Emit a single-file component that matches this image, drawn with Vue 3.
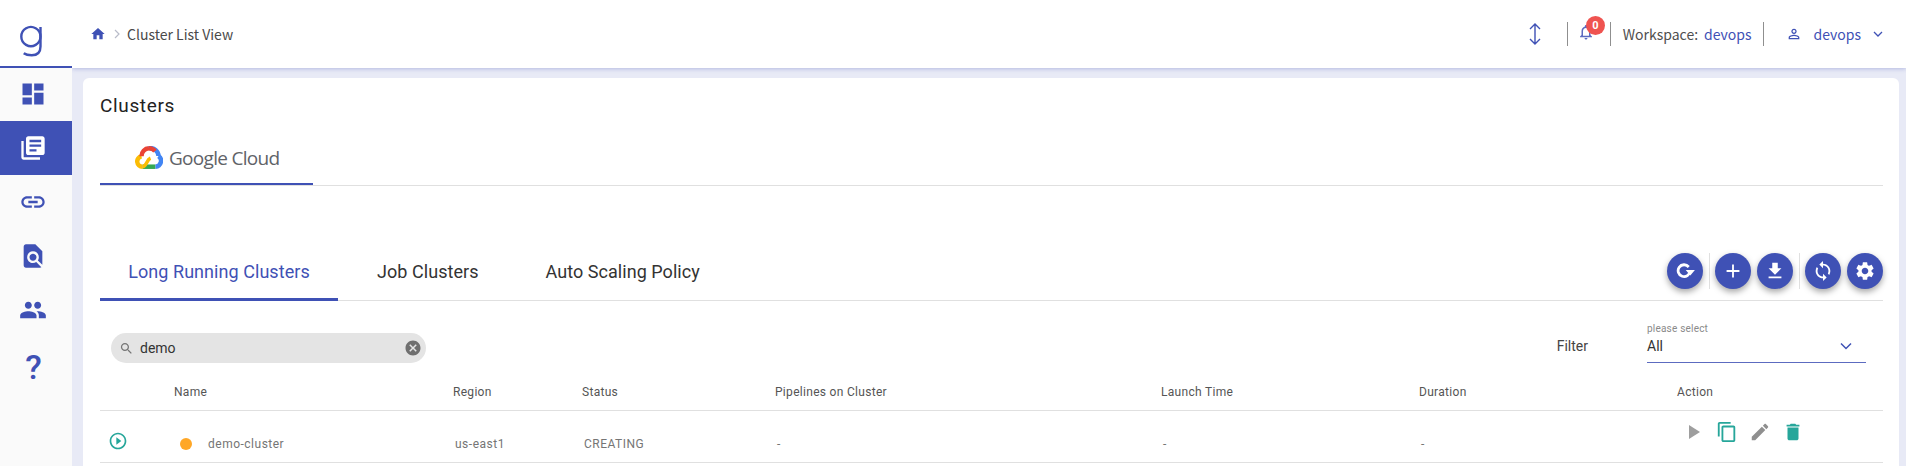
<script setup>
const icons = {
  home: 'M10 20v-6h4v6h5v-8h3L12 3 2 12h3v8z',
  dashboard: 'M3 13h8V3H3v10zm0 8h8v-6H3v6zm10 0h8V11h-8v10zm0-18v6h8V3h-8z',
  books: 'M4 6H2v14c0 1.1.9 2 2 2h14v-2H4V6zm16-4H8c-1.1 0-2 .9-2 2v12c0 1.1.9 2 2 2h12c1.1 0 2-.9 2-2V4c0-1.1-.9-2-2-2zm-1 9H9V9h10v2zm-4 4H9v-2h6v2zm4-8H9V5h10v2z',
  link: 'M3.9 12c0-1.71 1.39-3.1 3.1-3.1h4V7H7c-2.76 0-5 2.24-5 5s2.24 5 5 5h4v-1.9H7c-1.71 0-3.1-1.39-3.1-3.1zM8 13h8v-2H8v2zm9-6h-4v1.9h4c1.71 0 3.1 1.39 3.1 3.1s-1.39 3.1-3.1 3.1h-4V17h4c2.76 0 5-2.24 5-5s-2.24-5-5-5z',
  find: 'M20 19.59V8l-6-6H6c-1.1 0-1.99.9-1.99 2L4 20c0 1.1.89 2 1.99 2H18c.45 0 .85-.15 1.19-.4l-4.43-4.43c-.8.52-1.74.83-2.76.83-2.76 0-5-2.24-5-5s2.24-5 5-5 5 2.24 5 5c0 1.02-.31 1.96-.83 2.75L20 19.59zM9 13c0 1.66 1.34 3 3 3s3-1.34 3-3-1.34-3-3-3-3 1.34-3 3z',
  people: 'M16 11c1.66 0 2.99-1.34 2.99-3S17.66 5 16 5c-1.66 0-3 1.34-3 3s1.34 3 3 3zm-8 0c1.66 0 2.99-1.34 2.99-3S9.66 5 8 5C6.34 5 5 6.34 5 8s1.34 3 3 3zm0 2c-2.33 0-7 1.17-7 3.5V19h14v-2.5c0-2.33-4.67-3.5-7-3.5zm8 0c-.29 0-.62.02-.97.05 1.16.84 1.97 1.97 1.97 3.45V19h6v-2.5c0-2.33-4.67-3.5-7-3.5z',
  add: 'M19 13h-6v6h-2v-6H5v-2h6V5h2v6h6v2z',
  download: 'M19 9h-4V3H9v6H5l7 7 7-7zM5 18v2h14v-2H5z',
  sync: 'M12 4V1L8 5l4 4V6c3.31 0 6 2.69 6 6 0 1.01-.25 1.97-.7 2.8l1.46 1.46C19.54 15.03 20 13.57 20 12c0-4.42-3.58-8-8-8zm0 14c-3.31 0-6-2.69-6-6 0-1.01.25-1.97.7-2.8L5.24 7.74C4.46 8.97 4 10.43 4 12c0 4.42 3.58 8 8 8v3l4-4-4-4v3z',
  settings: 'M19.14 12.94c.04-.3.06-.61.06-.94 0-.32-.02-.64-.07-.94l2.03-1.58c.18-.14.23-.41.12-.61l-1.92-3.32c-.12-.22-.37-.29-.59-.22l-2.39.96c-.5-.38-1.03-.7-1.62-.94l-.36-2.54c-.04-.24-.24-.41-.48-.41h-3.84c-.24 0-.43.17-.47.41l-.36 2.54c-.59.24-1.13.57-1.62.94l-2.39-.96c-.22-.08-.47 0-.59.22L2.74 8.87c-.12.21-.08.47.12.61l2.03 1.58c-.05.3-.09.63-.09.94s.02.64.07.94l-2.03 1.58c-.18.14-.23.41-.12.61l1.92 3.32c.12.22.37.29.59.22l2.39-.96c.5.38 1.03.7 1.62.94l.36 2.54c.05.24.24.41.48.41h3.84c.24 0 .44-.17.47-.41l.36-2.54c.59-.24 1.13-.56 1.62-.94l2.39.96c.22.08.47 0 .59-.22l1.92-3.32c.12-.22.07-.47-.12-.61l-2.01-1.58zM12 15.6c-1.98 0-3.6-1.62-3.6-3.6s1.62-3.6 3.6-3.6 3.6 1.62 3.6 3.6-1.62 3.6-3.6 3.6z',
  rotate: 'M17.2 6.500A8 8 0 1 0 19 12h-3A5 5 0 1 1 15 8.700zM12.800 11l5 6 5-6z',
  play: 'M8 5v14l11-7z',
  playCircle: 'M10 16.5l6-4.5-6-4.5v9zM12 2C6.48 2 2 6.48 2 12s4.48 10 10 10 10-4.48 10-10S17.52 2 12 2zm0 18c-4.41 0-8-3.59-8-8s3.59-8 8-8 8 3.59 8 8-3.59 8-8 8z',
  copy: 'M16 1H4c-1.1 0-2 .9-2 2v14h2V3h12V1zm3 4H8c-1.1 0-2 .9-2 2v14c0 1.1.9 2 2 2h11c1.1 0 2-.9 2-2V7c0-1.1-.9-2-2-2zm0 16H8V7h11v14z',
  edit: 'M3 17.25V21h3.75L17.81 9.94l-3.75-3.75L3 17.25zM20.71 7.04c.39-.39.39-1.02 0-1.41l-2.34-2.34c-.39-.39-1.02-.39-1.41 0l-1.83 1.83 3.75 3.75 1.83-1.83z',
  trash: 'M6 19c0 1.1.9 2 2 2h8c1.1 0 2-.9 2-2V7H6v12zM19 4h-3.5l-1-1h-5l-1 1H5v2h14V4z',
  search: 'M15.5 14h-.79l-.28-.27C15.41 12.59 16 11.11 16 9.5 16 5.91 13.09 3 9.5 3S3 5.91 3 9.5 5.91 16 9.5 16c1.61 0 3.09-.59 4.23-1.57l.27.28v.79l5 4.99L20.49 19l-4.99-5zm-6 0C7.01 14 5 11.99 5 9.5S7.01 5 9.5 5 14 7.01 14 9.5 11.99 14 9.5 14z',
  cancel: 'M12 2C6.47 2 2 6.47 2 12s4.47 10 10 10 10-4.47 10-10S17.53 2 12 2zm5 13.59L15.59 17 12 13.41 8.41 17 7 15.59 10.59 12 7 8.41 8.41 7 12 10.59 15.59 7 17 8.41 13.41 12 17 15.59z',
  bell: 'M12 22c1.1 0 2-.9 2-2h-4c0 1.1.9 2 2 2zm6-6v-5c0-3.07-1.63-5.64-4.5-6.32V4c0-.83-.67-1.5-1.5-1.5s-1.5.67-1.5 1.5v.68C7.64 5.36 6 7.92 6 11v5l-2 2v1h16v-1l-2-2zm-2 1H8v-6c0-2.48 1.51-4.5 4-4.5s4 2.02 4 4.5v6z',
  person: 'M12 5.9c1.16 0 2.1.94 2.1 2.1s-.94 2.1-2.1 2.1S9.9 9.16 9.9 8s.94-2.1 2.1-2.1m0 9c2.97 0 6.1 1.46 6.1 2.1v1.1H5.9V17c0-.64 3.13-2.1 6.1-2.1M12 4C9.79 4 8 5.79 8 8s1.79 4 4 4 4-1.79 4-4-1.79-4-4-4zm0 9c-2.67 0-8 1.34-8 4v3h16v-3c0-2.66-5.33-4-8-4z',
}
const nav = [
  { icon: 'dashboard' },
  { icon: 'books', active: true },
  { icon: 'link' },
  { icon: 'find' },
  { icon: 'people' },
  { text: '?' },
]
const tabs = ['Long Running Clusters', 'Job Clusters', 'Auto Scaling Policy']
const columns = ['', 'Name', 'Region', 'Status', 'Pipelines on Cluster', 'Launch Time', 'Duration', 'Action']
const fabGroups = [['rotate'], ['add', 'download'], ['sync', 'settings']]
</script>

<template>
  <div class="app">
    <aside class="sidebar">
      <div class="logo">
        <svg width="24" height="34" viewBox="0 0 24 34" fill="none" stroke="#3f51b5" stroke-width="2.400">
          <path d="M21.500 11.500a9.600 9.600 0 1 0 0 .1" />
          <path d="M21.500 2v19.500c0 6-3.600 8.800-8.800 8.800c-3 0-6-.6-8-2" />
        </svg>
      </div>
      <div v-for="(item, i) in nav" :key="i" class="nav-item" :class="{ active: item.active }">
        <svg v-if="item.icon" width="28" height="28" viewBox="0 0 24 24"><path :d="icons[item.icon]" fill="currentColor" /></svg>
        <span v-else class="question">{{ item.text }}</span>
      </div>
    </aside>

    <div class="main">
      <header class="topbar">
        <svg class="home" width="16" height="16" viewBox="0 0 24 24"><path :d="icons.home" fill="#3f51b5" /></svg>
        <svg class="crumb-sep" width="8" height="10" viewBox="0 0 8 10" fill="none" stroke="#b9bcc9" stroke-width="1.200"><path d="M2 1l4 4-4 4" /></svg>
        <span class="crumb">Cluster List View</span>
        <div class="top-right">
          <svg class="updown" width="14" height="22" viewBox="0 0 14 22" fill="none" stroke="#3f51b5" stroke-width="1.400"><path d="M7 1.500v19M2 6l5-5 5 5M2 16l5 5 5-5" /></svg>
          <i class="vline first"></i>
          <div class="bell">
            <svg width="18" height="18" viewBox="0 0 24 24"><path :d="icons.bell" fill="#5c6bc0" /></svg>
            <span class="badge">0</span>
          </div>
          <i class="vline second"></i>
          <span class="ws-label">Workspace:</span>
          <span class="ws-value">devops</span>
          <i class="vline third"></i>
          <svg class="person" width="16" height="16" viewBox="0 0 24 24"><path :d="icons.person" fill="#3f51b5" /></svg>
          <span class="user">devops</span>
          <svg class="chev" width="10" height="7" viewBox="0 0 10 7" fill="none" stroke="#3f51b5" stroke-width="1.300"><path d="M1 1l4 4 4-4" /></svg>
        </div>
      </header>

      <div class="content">
        <section class="card">
          <h1 class="title">Clusters</h1>
          <div class="cloud-tabs">
            <div class="cloud-tab">
              <svg width="28" height="23" viewBox="0 0 28 23" fill="none" stroke-width="4.500">
                <path d="M7.500 20.700H20.500" stroke="#34a853" />
                <path d="M20.500 20.700a5.800 5.800 0 0 0 3-10.600" stroke="#4285f4" />
                <path d="M7.500 20.700a5.300 5.300 0 0 1-1-10.500" stroke="#fbbc04" />
                <path d="M6.500 10.200a7.800 7.800 0 0 1 7.500-7.900" stroke="#ea4335" />
                <path d="M14 2.300a8 8 0 0 1 9.500 7.800" stroke="#4285f4" />
                <path d="M14 2.300a8 8 0 0 1 6 2.800" stroke="#ea4335" />
                <path d="M7.500 20.700c4 0 4-7 8-8.500" stroke="#fbbc04" stroke-width="3.500" />
              </svg>
              <span class="cloud-word">Google Cloud</span>
            </div>
          </div>

          <div class="tabs-row">
            <div v-for="(t, i) in tabs" :key="t" class="tab" :class="{ active: i === 0 }">{{ t }}</div>
            <div class="fabs">
              <div v-for="(group, g) in fabGroups" :key="g" class="fab-group">
                <button v-for="f in group" :key="f" class="fab">
                  <svg width="22" height="22" viewBox="0 0 24 24"><path :d="icons[f]" fill="#fff" /></svg>
                </button>
              </div>
            </div>
          </div>

          <div class="tools">
            <div class="search">
              <svg width="15" height="15" viewBox="0 0 24 24"><path :d="icons.search" fill="#757575" /></svg>
              <span class="search-text">demo</span>
              <svg class="clear" width="18" height="18" viewBox="0 0 24 24"><path :d="icons.cancel" fill="#6f6f6f" /></svg>
            </div>
            <span class="filter">Filter</span>
            <div class="select">
              <span class="select-label">please select</span>
              <div class="select-value">
                <span>All</span>
                <svg width="12" height="8" viewBox="0 0 12 8" fill="none" stroke="#3f51b5" stroke-width="1.500"><path d="M1 1.500l5 5 5-5" /></svg>
              </div>
            </div>
          </div>

          <div class="grid head">
            <div v-for="c in columns" :key="c">{{ c }}</div>
          </div>
          <div class="grid row">
            <div class="expand"><svg width="20" height="20" viewBox="0 0 24 24"><path :d="icons.playCircle" fill="#26a69a" /></svg></div>
            <div class="name"><span class="dot"></span>demo-cluster</div>
            <div>us-east1</div>
            <div>CREATING</div>
            <div>-</div>
            <div>-</div>
            <div>-</div>
            <div class="actions">
              <svg width="24" height="24" viewBox="0 0 24 24"><path :d="icons.play" fill="#9e9e9e" /></svg>
              <svg width="22" height="22" viewBox="0 0 24 24"><path :d="icons.copy" fill="#26a69a" /></svg>
              <svg width="22" height="22" viewBox="0 0 24 24"><path :d="icons.edit" fill="#8f8f8f" /></svg>
              <svg width="22" height="22" viewBox="0 0 24 24"><path :d="icons.trash" fill="#26a69a" /></svg>
            </div>
          </div>
        </section>
      </div>
    </div>
  </div>
</template>

<style>
html, body { margin: 0; padding: 0; overflow: hidden; background: #fafafa; }
</style>

<style scoped>
.app { display: flex; width: 1906px; height: 466px; overflow: hidden; font-family: Roboto, "Liberation Sans", sans-serif; }

.sidebar { width: 72px; flex: none; background: #fafafa; display: flex; flex-direction: column; position: relative; z-index: 2; }
.logo { height: 66px; background: #fff; border-bottom: 2px solid #3f51b5; display: flex; align-items: center; justify-content: center; margin-bottom: -1px; }
.logo svg { margin-top: 17px; margin-right: 10px; }
.nav-item { height: 54px; display: flex; align-items: center; justify-content: center; color: #3f51b5; padding-right: 6px; }
.nav-item.active { background: #3f51b5; color: #fff; }
.question { font: 500 34px Roboto, sans-serif; line-height: 1; margin: 6px 0 0 1px; }

.main { flex: 1; min-width: 0; display: flex; flex-direction: column; background: #e8eaf6; }
.topbar { height: 68px; flex: none; background: #fff; display: flex; align-items: center; padding-left: 18px; box-shadow: 0 1px 4px rgba(63, 81, 181, .3); position: relative; font-family: "Noto Sans CJK SC", "Noto Sans", sans-serif; }
.home { margin-right: 7px; }
.crumb-sep { margin-right: 6px; }
.crumb { font-size: 14px; color: #4a4a4a; }
.top-right { margin-left: auto; display: flex; align-items: center; padding-right: 23px; font-size: 14px; }
.updown { margin-right: 25px; }
.vline { display: block; width: 1px; height: 24px; background: #8f8f8f; }
.bell { position: relative; width: 18px; height: 18px; margin: -4px 15px 0 9px; }
.bell svg { display: block; }
.badge { position: absolute; left: 9px; top: -7px; width: 19px; height: 19px; border-radius: 50%; background: #ef5350; color: #fff; font: 700 11px/19px Roboto, sans-serif; text-align: center; }
.vline.second { margin-right: 12px; }
.ws-label { color: #4f4f4f; margin-right: 6px; }
.ws-value { color: #3f51b5; margin-right: 11px; }
.vline.third { margin-right: 22px; }
.person { margin-right: 12px; }
.user { color: #3f51b5; margin-right: 12px; }

.content { flex: 1; min-height: 0; padding: 10px 7px 0 11px; }
.card { height: 100%; box-sizing: border-box; background: #fff; border-radius: 6px 6px 0 0; padding: 0 16px 0 17px; }
.title { margin: 0; padding-top: 17px; font: 400 19px/22px Roboto, sans-serif; letter-spacing: .65px; color: #222; }
.cloud-tabs { border-bottom: 1px solid #e0e0e0; height: 68px; }
.cloud-tab { width: 213px; height: 68px; box-sizing: border-box; border-bottom: 2px solid #3f51b5; display: flex; align-items: center; padding: 15px 0 0 35px; gap: 6px; }
.cloud-word { font: 400 19px "Open Sans", sans-serif; letter-spacing: -.7px; color: #5f6368; }

.tabs-row { display: flex; height: 68px; margin-top: 47px; border-bottom: 1px solid #e0e0e0; align-items: stretch; box-sizing: border-box; }
.tab { font-size: 18px; padding: 28px 0 0; color: #333; box-sizing: border-box; margin-right: 67px; letter-spacing: .05px; }
.tab.active { width: 238px; margin-right: 39px; text-align: center; color: #3f51b5; border-bottom: 3px solid #3f51b5; margin-bottom: -1px; }
.fabs { margin-left: auto; display: flex; padding-top: 20px; height: 36px; }
.fab-group { display: flex; gap: 6px; padding: 0 6px 0 5px; border-right: 1px solid #e0e0e0; height: 36px; }
.fab-group:last-child { border-right: 0; padding-right: 0; }
.fab { width: 36px; height: 36px; padding: 0; border: 0; border-radius: 50%; background: #3f51b5; display: flex; align-items: center; justify-content: center; box-shadow: 0 3px 6px rgba(0, 0, 0, .35); }

.tools { display: flex; align-items: flex-start; height: 80px; padding-left: 11px; }
.search { margin-top: 32px; width: 315px; height: 30px; box-sizing: border-box; padding: 0 4px 0 8px; border-radius: 15px; background: #e4e4e4; display: flex; align-items: center; gap: 6px; }
.search-text { font-size: 14px; color: #333; }
.clear { margin-left: auto; }
.filter { margin: 34px 0 0 auto; font-size: 14px; color: #444; line-height: 22px; }
.select { width: 219px; margin: 22px 17px 0 59px; height: 39px; border-bottom: 1px solid #5c6bc0; }
.select-label { display: block; font-size: 10px; line-height: 12px; color: #8a8a8a; letter-spacing: .2px; }
.select-value { display: flex; justify-content: space-between; align-items: center; font-size: 14px; color: #333; height: 22px; padding-right: 14px; }

.grid { display: grid; grid-template-columns: 74px 279px 129px 193px 386px 258px 258px 206px; border-bottom: 1px solid #e0e0e0; }
.head { height: 29px; font-size: 12px; color: #555; letter-spacing: .3px; line-height: 22px; }
.row { height: 52px; box-sizing: border-box; font-size: 12px; color: #757575; letter-spacing: .5px; align-items: start; line-height: 16px; padding-top: 25px; }
.row > div:not(.actions):not(.expand):not(.name) { padding-left: 2px; }
.expand { margin-top: -5px; padding-left: 8px; }
.expand svg { display: block; }
.name { display: flex; align-items: center; gap: 16px; padding-left: 6px; }
.dot { width: 12px; height: 12px; border-radius: 50%; background: #ffa726; }
.actions { display: flex; align-items: center; gap: 11px; margin-top: -16px; padding-left: 4px; }
</style>
